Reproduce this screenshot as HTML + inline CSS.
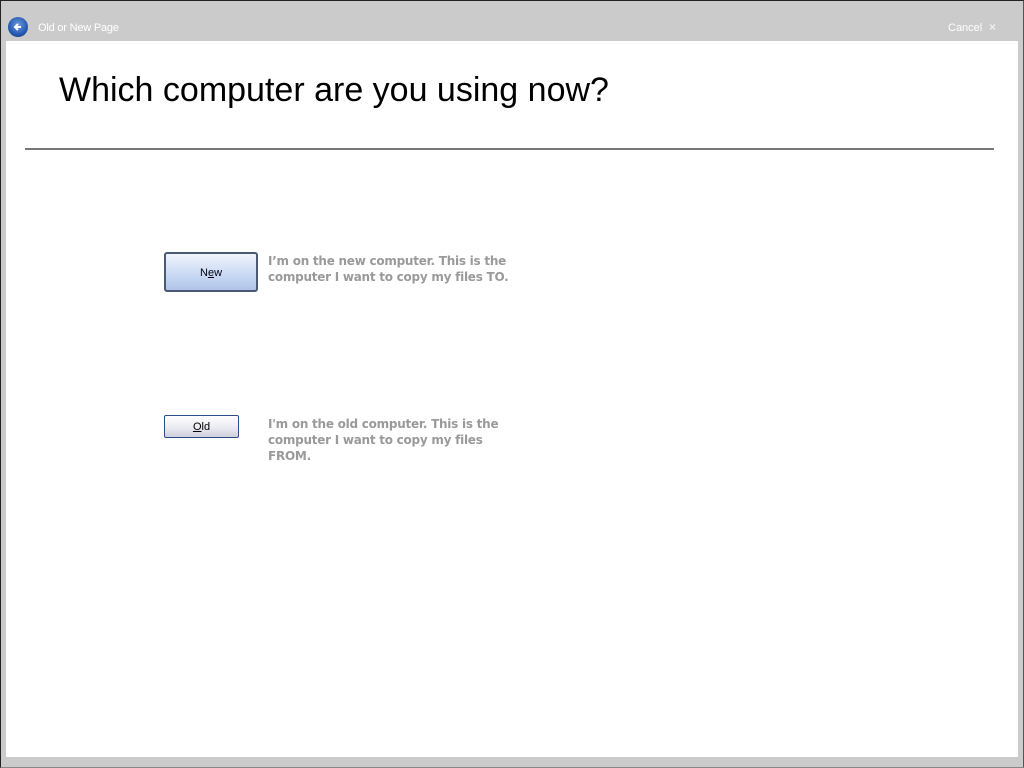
<!DOCTYPE html>
<html><head><style>
html,body{margin:0;padding:0;width:1024px;height:768px;overflow:hidden;background:#cbcbcb;font-family:"Liberation Sans",sans-serif}
.frame{position:absolute;left:0;top:0;width:1022px;height:766px;border-top:1px solid #222;border-left:1px solid #222;border-right:2px solid #555;border-bottom:1px solid #888;background:#cbcbcb}
.white{position:absolute;left:6px;top:41px;width:1012px;height:716px;background:#fff}
.title{position:absolute;left:38px;top:22px;font-size:11px;color:#fff;letter-spacing:-0.2px}
.cancel{position:absolute;left:948px;top:22px;font-size:11px;color:#fff}
.x{position:absolute;left:989px;top:20px;font-size:12px;color:#eee;font-weight:bold}
.back{position:absolute;left:8px;top:17px;width:20px;height:20px;border-radius:50%;background:radial-gradient(circle at 50% 40%,#6a9be0,#1d4fa8 70%,#333 100%)}
h1{position:absolute;left:59px;top:71px;margin:0;font-weight:normal;font-size:34px;color:#000;font-family:"Liberation Sans",sans-serif}
.rule{position:absolute;left:25px;top:148px;width:969px;height:2px;background:#777}
.btn{position:absolute;font-size:11px;color:#000;text-align:center;font-family:"Liberation Sans",sans-serif}
.new{left:164px;top:252px;border:2px solid #4a5a75;border-radius:3px;background:linear-gradient(#f0f4fc,#c8d8f4 60%,#b0c4e8);width:90px;height:36px;line-height:38px;color:#001}
.old{left:164px;top:415px;width:73px;height:21px;line-height:23px;border:1px solid #2c4f8a;border-radius:2px;background:linear-gradient(#fff,#e8e8f0 60%,#cfcfdc)}
.txt{position:absolute;left:268px;font-family:"DejaVu Sans",sans-serif;font-weight:bold;font-size:12px;line-height:16px;color:#9a9a9a;white-space:nowrap;letter-spacing:-0.25px}
</style></head><body>
<div class="frame"></div>
<div class="white"></div>
<div class="back"><svg width="20" height="20"><path d="M13 10H7M10 7L7 10L10 13" stroke="#fff" stroke-width="2" fill="none"/></svg></div>
<div class="title">Old or New Page</div>
<div class="cancel">Cancel</div>
<div class="x">×</div>
<h1>Which computer are you using now?</h1>
<div class="rule"></div>
<div class="btn new">N<u>e</u>w</div>
<div class="txt" style="top:253px">I’m on the new computer. This is the<br>computer I want to copy my files TO.</div>
<div class="btn old"><u>O</u>ld</div>
<div class="txt" style="top:416px">I'm on the old computer. This is the<br>computer I want to copy my files<br>FROM.</div>
</body></html>
